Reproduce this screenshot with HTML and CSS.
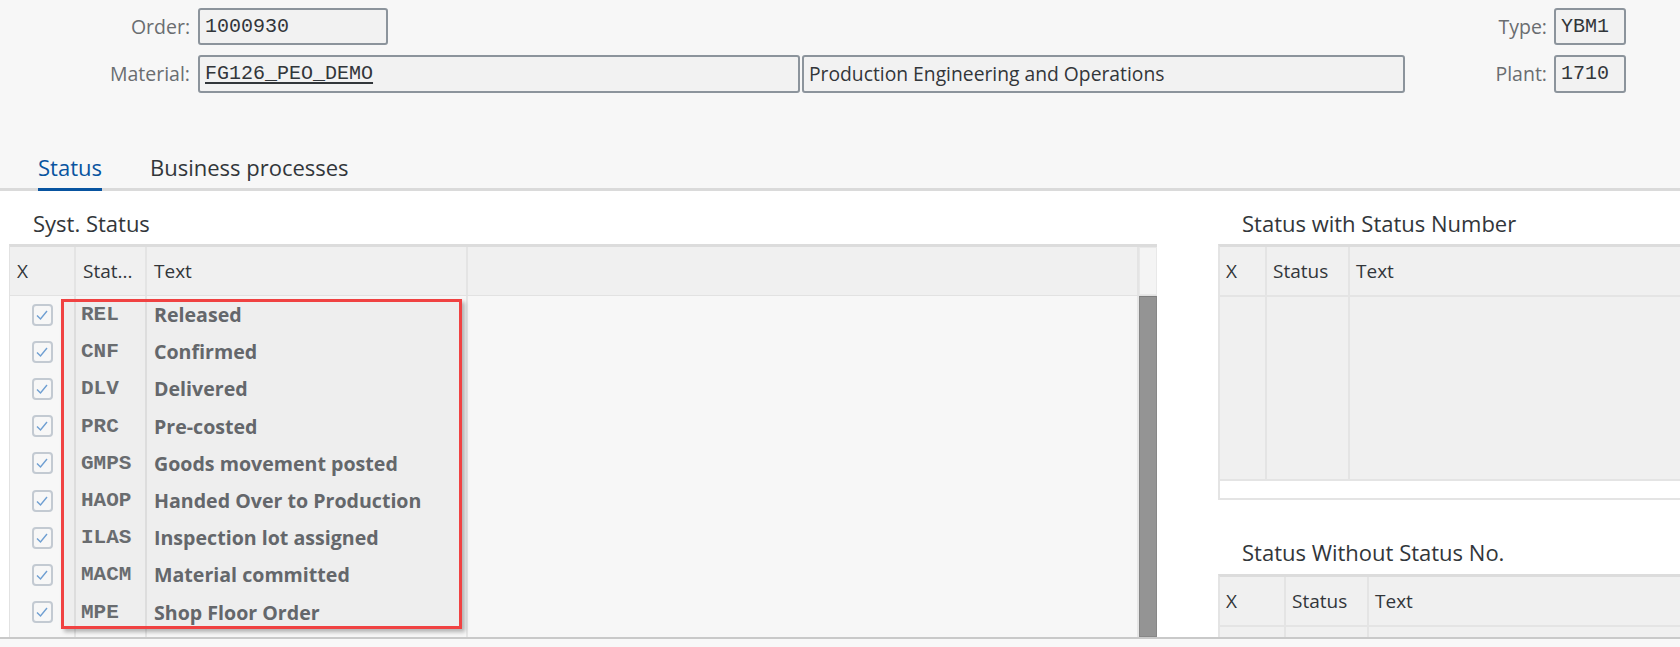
FILE: index.html
```html
<!DOCTYPE html>
<html lang="en">
<head>
    <meta charset="UTF-8">
    <meta name="viewport" content="width=device-width, initial-scale=1.0">
    <title>Order Status</title>
    <link rel="stylesheet" href="styles.css">
</head>
<body>
    <div class="header">
        <div class="form-row">
            <label class="lbl">Order:</label>
            <div class="field field-order">1000930</div>
            <div class="spacer"></div>
            <label class="lbl-right">Type:</label>
            <div class="field field-small">YBM1</div>
        </div>
        <div class="form-row">
            <label class="lbl">Material:</label>
            <div class="field field-material"><u>FG126_PEO_DEMO</u></div>
            <div class="field field-desc">Production Engineering and Operations</div>
            <div class="spacer"></div>
            <label class="lbl-right">Plant:</label>
            <div class="field field-small">1710</div>
        </div>
        <div class="tabs">
            <div class="tab active">Status</div>
            <div class="tab">Business processes</div>
        </div>
    </div>

    <div class="main">
        <div class="left">
            <div class="panel-title">Syst. Status</div>
            <div class="tbl">
                <div class="thead">
                    <div class="th c-x">X</div>
                    <div class="th c-st">Stat...</div>
                    <div class="th c-txt">Text</div>
                    <div class="th c-rest"></div>
                    <div class="th c-sb"></div>
                </div>
                <div class="tbody">
                    <div class="rows" id="sysRows"></div>
                    <div class="scrollbar"></div>
                    <div class="highlight"></div>
                </div>
            </div>
        </div>

        <div class="right">
            <div class="panel-title">Status with Status Number</div>
            <div class="rtbl rtbl-a">
                <div class="rhead">
                    <div class="th">X</div>
                    <div class="th">Status</div>
                    <div class="th">Text</div>
                </div>
                <div class="rbody">
                    <div></div><div></div><div></div>
                </div>
                <div class="rfoot"></div>
            </div>

            <div class="panel-title second">Status Without Status No.</div>
            <div class="rtbl rtbl-b">
                <div class="rhead">
                    <div class="th">X</div>
                    <div class="th">Status</div>
                    <div class="th">Text</div>
                </div>
                <div class="rbody">
                    <div></div><div></div><div></div>
                </div>
            </div>
        </div>
    </div>

    <div class="footer"></div>

    <script>
        let statuses = [
            ['REL', 'Released'],
            ['CNF', 'Confirmed'],
            ['DLV', 'Delivered'],
            ['PRC', 'Pre-costed'],
            ['GMPS', 'Goods movement posted'],
            ['HAOP', 'Handed Over to Production'],
            ['ILAS', 'Inspection lot assigned'],
            ['MACM', 'Material committed'],
            ['MPE', 'Shop Floor Order'],
            ['', '']
        ];

        let check = '<svg width="14" height="12" viewBox="0 0 14 12"><polyline points="2,6.5 5.5,10 12,2" fill="none" stroke="#6f9fd2" stroke-width="1.4"/></svg>';
        let html = '';

        statuses.forEach(s => {
            let box = s[0] ? `<span class="cb">${check}</span>` : '';
            html += `<div class="row">
                <div class="td c-x">${box}</div>
                <div class="td c-st mono">${s[0]}</div>
                <div class="td c-txt">${s[1]}</div>
                <div class="td c-rest"></div>
            </div>`;
        });

        document.getElementById('sysRows').innerHTML = html;
    </script>
</body>
</html>
```

FILE: styles.css
```css
html, body {
    margin: 0;
    height: 647px;
    overflow: hidden;
}
body {
    font-family: "Open Sans", sans-serif;
    color: #32363a;
    background: #fff;
    display: flex;
    flex-direction: column;
}
.header {
    background: #f7f7f7;
    padding-top: 8px;
}
.form-row {
    display: flex;
    align-items: center;
    height: 37px;
    margin-bottom: 10px;
    padding-right: 54px;
}
.lbl {
    width: 190px;
    margin-right: 8px;
    text-align: right;
    font-size: 19.5px;
    color: #6a6d70;
}
.lbl-right {
    margin-right: 7px;
    font-size: 19.5px;
    color: #6a6d70;
}
.spacer {
    flex: 1;
}
.field {
    box-sizing: border-box;
    height: 37px;
    border: 2px solid #8c949c;
    border-radius: 3px;
    background: #f2f2f2;
    font-family: "Liberation Mono", monospace;
    font-size: 20px;
    line-height: 33px;
    padding-left: 5px;
    color: #32363a;
}
.field-order {
    width: 190px;
}
.field-material {
    width: 602px;
    height: 38px;
}
.field-material u {
    text-underline-offset: 3px;
}
.field-desc {
    width: 603px;
    height: 38px;
    margin-left: 2px;
    font-family: "Open Sans", sans-serif;
    font-size: 19.3px;
}
.field-small {
    width: 72px;
}
.form-row:nth-child(2) .field-small {
    height: 38px;
}
.tabs {
    display: flex;
    gap: 48px;
    padding-left: 38px;
    margin-top: 61px;
    border-bottom: 3px solid #dadada;
}
.tab {
    font-size: 22px;
    line-height: 28px;
    padding-bottom: 7px;
    border-bottom: 3px solid transparent;
    margin-bottom: -3px;
    color: #32363a;
}
.tab.active {
    color: #0854a0;
    border-bottom-color: #0854a0;
}

.main {
    flex: 1;
    display: flex;
    gap: 61px;
    padding: 18px 0 0 9px;
    overflow: hidden;
}
.panel-title {
    font-size: 22px;
    line-height: 28px;
    height: 28px;
    margin-bottom: 7px;
    padding-left: 24px;
    color: #32363a;
}
.panel-title.second {
    margin-top: 38px;
    margin-bottom: 8px;
}
.left {
    width: 1148px;
    flex-shrink: 0;
    display: flex;
    flex-direction: column;
}
.tbl {
    flex: 1;
    display: flex;
    flex-direction: column;
    border-top: 3px solid #dcdcdc;
    border-left: 1px solid #e2e2e2;
    min-height: 0;
}
.thead {
    display: flex;
    height: 48px;
    background: #f0f0f0;
    border-bottom: 1px solid #e2e2e2;
}
.th {
    box-sizing: border-box;
    font-size: 19px;
    line-height: 48px;
    padding-left: 7px;
    border-right: 2px solid #e4e4e4;
    color: #32363a;
    white-space: nowrap;
}
.c-x {
    width: 66px;
}
.c-st {
    width: 71px;
}
.c-txt {
    width: 321px;
}
.c-rest {
    flex: 1;
}
.c-sb {
    width: 18px;
    background: #f4f4f4;
    border: 1px solid #e8e8e8;
    padding: 0;
}
.tbody {
    flex: 1;
    display: flex;
    position: relative;
    overflow: hidden;
    background: #f7f7f7;
}
.rows {
    flex: 1;
}
.row {
    display: flex;
    height: 37.2px;
}
.td {
    box-sizing: border-box;
    border-right: 2px solid #e6e6e6;
    padding-left: 7px;
    font-size: 19.6px;
    font-weight: bold;
    line-height: 37px;
    color: #686b6f;
    white-space: nowrap;
}
.td.c-x {
    display: flex;
    align-items: center;
    justify-content: center;
    padding-left: 0;
}
.td.mono {
    font-family: "Liberation Mono", monospace;
    font-size: 21px;
    padding-left: 5px;
    color: #6d7074;
}
.cb {
    box-sizing: border-box;
    width: 21px;
    height: 22px;
    border: 2px solid #c3cad2;
    border-radius: 4px;
    display: flex;
    align-items: center;
    justify-content: center;
}
.scrollbar {
    width: 16px;
    background: #949494;
    border: 1px solid #878787;
    border-top-color: #7d7d7d;
}
.highlight {
    position: absolute;
    left: 51px;
    top: 3px;
    width: 401px;
    height: 330px;
    box-sizing: border-box;
    border: 3px solid #f04242;
    background: rgba(0, 0, 0, 0.035);
    box-shadow: 3px 3px 4px rgba(0, 0, 0, 0.28);
}

.right {
    width: 520px;
    flex-shrink: 0;
    display: flex;
    flex-direction: column;
}
.rtbl {
    border-top: 3px solid #dcdcdc;
    border-left: 2px solid #e4e4e4;
    background: #f0f0f0;
}
.rhead, .rbody {
    display: flex;
}
.rhead {
    height: 48px;
    border-bottom: 2px solid #e4e4e4;
}
.rhead .th {
    padding-left: 6px;
}
.rbody div {
    border-right: 2px solid #e4e4e4;
    box-sizing: border-box;
}
.rtbl-a .rbody {
    height: 182px;
}
.rtbl-b .rbody {
    height: 20px;
}
.rtbl-a .th:nth-child(1), .rtbl-a .rbody div:nth-child(1) {
    width: 47px;
}
.rtbl-a .th:nth-child(2), .rtbl-a .rbody div:nth-child(2) {
    width: 83px;
}
.rtbl-b .th:nth-child(1), .rtbl-b .rbody div:nth-child(1) {
    width: 66px;
}
.rtbl-b .th:nth-child(2), .rtbl-b .rbody div:nth-child(2) {
    width: 83px;
}
.rhead .th:nth-child(3), .rbody div:nth-child(3) {
    flex: 1;
    border-right: none;
}
.rfoot {
    height: 17px;
    background: #fff;
    border-top: 2px solid #e4e4e4;
    border-bottom: 2px solid #e4e4e4;
}
.footer {
    height: 8px;
    border-top: 2px solid #c9c9c9;
    background: #f8f8f8;
}
```
